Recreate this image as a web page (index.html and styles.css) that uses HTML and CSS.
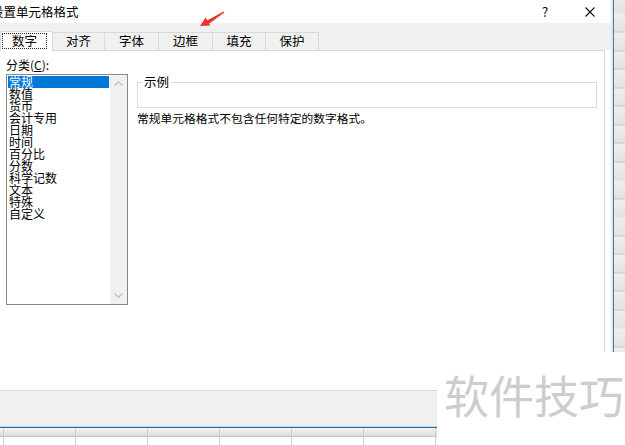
FILE: index.html
```html
<!DOCTYPE html>
<html lang="zh-CN">
<head>
    <meta charset="UTF-8">
    <title>设置单元格格式</title>
    <link rel="stylesheet" href="styles.css">
</head>
<body>
<div class="screen">
    <div class="top">
        <!-- Format Cells dialog -->
        <div class="dialog">
            <div class="titlebar">
                <span class="title">设置单元格格式</span>
                <span class="help">?</span>
                <svg class="close" width="10" height="10" viewBox="0 0 10 10">
                    <path d="M0.5 0.5 L9.5 9.5 M9.5 0.5 L0.5 9.5" stroke="#111" stroke-width="1.1" fill="none"/>
                </svg>
            </div>

            <div class="tabbar">
                <div class="tab active"><span class="focus">数字</span></div>
                <div class="tab t2">对齐</div>
                <div class="tab t3">字体</div>
                <div class="tab t4">边框</div>
                <div class="tab t5">填充</div>
                <div class="tab t6">保护</div>
            </div>

            <div class="page">
                <div class="left">
                    <div class="label">分类(<u>C</u>):</div>
                    <div class="listbox">
                        <ul class="items">
                            <li class="sel">常规</li>
                            <li>数值</li>
                            <li>货币</li>
                            <li>会计专用</li>
                            <li>日期</li>
                            <li>时间</li>
                            <li>百分比</li>
                            <li>分数</li>
                            <li>科学记数</li>
                            <li>文本</li>
                            <li>特殊</li>
                            <li>自定义</li>
                        </ul>
                        <div class="scrollbar">
                            <div class="sb-btn">
                                <svg width="9" height="5" viewBox="0 0 9 5"><path d="M0.5 4.5 L4.5 0.8 L8.5 4.5" stroke="#c3c3c3" stroke-width="1.5" fill="none"/></svg>
                            </div>
                            <div class="sb-btn">
                                <svg width="9" height="5" viewBox="0 0 9 5"><path d="M0.5 0.5 L4.5 4.2 L8.5 0.5" stroke="#c3c3c3" stroke-width="1.5" fill="none"/></svg>
                            </div>
                        </div>
                    </div>
                </div>

                <div class="right">
                    <fieldset class="sample">
                        <legend>示例</legend>
                    </fieldset>
                    <p class="desc">常规单元格格式不包含任何特定的数字格式。</p>
                </div>
            </div>
        </div>

        <!-- sheet behind the dialog -->
        <div class="rowheads"><div class="rh"></div></div>
    </div>

    <div class="footer"></div>

    <div class="grid">
        <div class="hdr"></div>
        <div class="cells"></div>
    </div>

    <div class="watermark">软件技巧</div>

    <svg class="arrow" width="34" height="22" viewBox="0 0 34 22">
        <polygon points="28.4,4.6 27.6,3.4 10.6,12.7 12.6,15.9" fill="#e5332a"/>
        <polygon points="4,18 14.2,17.4 9.6,9.6" fill="#e5332a"/>
    </svg>
</div>
</body>
</html>
```

FILE: styles.css
```css
* {
    box-sizing: border-box;
}
body {
    margin: 0;
    width: 625px;
    height: 445px;
    overflow: hidden;
    background-color: #ffffff;
    font-family: "Noto Sans CJK SC", "Noto Sans", sans-serif;
    font-size: 12px;
    color: #000;
}
.screen {
    position: relative;
    width: 625px;
    height: 445px;
}
.top {
    display: flex;
    height: 390px;
}

/* Dialog */
.dialog {
    width: 611px;
    background-color: #ffffff;
}
.titlebar {
    height: 23px;
    display: flex;
    align-items: center;
}
.title {
    flex: 1;
    margin-left: -9px;
    font-size: 12.5px;
    line-height: 16px;
}
.help {
    width: 10px;
    text-align: center;
    font-size: 13px;
    line-height: 16px;
    margin-right: 35px;
}
.close {
    display: block;
    margin-right: 16px;
}

/* Tabs */
.tabbar {
    height: 27px;
    background-color: #f0f0f0;
    display: flex;
    align-items: flex-end;
}
.tab {
    width: 53px;
    height: 18px;
    border: 1px solid #d9d9d9;
    border-left: none;
    border-bottom: none;
    background-color: #f0f0f0;
    text-align: center;
    font-size: 12.5px;
    line-height: 16px;
}
.tab.active {
    width: 53px;
    height: 20px;
    border-left: 1px solid #d9d9d9;
    background-color: #ffffff;
    position: relative;
    top: 1px;
    z-index: 1;
}
.tab.t2 { width: 52px; }
.tab.t3 { width: 54px; }
.tab.t4 { width: 54px; }
.focus {
    display: block;
    width: 45px;
    height: 16px;
    margin: 1px 0 0 1px;
    border: 1px dotted #222;
    line-height: 14px;
}

/* Tab page */
.page {
    width: 605px;
    height: 340px;
    border-top: 1px solid #d9d9d9;
    border-right: 1px solid #d9d9d9;
    padding-left: 6px;
    display: flex;
}
.left {
    width: 122px;
}
.label {
    margin-top: 6px;
    line-height: 16px;
    font-size: 12px;
}
.listbox {
    margin-top: 1px;
    width: 122px;
    height: 231px;
    border: 1px solid #828790;
    display: flex;
}
.items {
    list-style: none;
    margin: 0;
    padding: 1px 1px 0 1px;
    width: 103px;
}
.items li {
    height: 12px;
    line-height: 12px;
    font-size: 12px;
    padding-left: 1px;
    white-space: nowrap;
}
.items li.sel {
    background-color: #0078d7;
    color: #ffffff;
}
.scrollbar {
    width: 17px;
    background-color: #f0f0f0;
    display: flex;
    flex-direction: column;
    justify-content: space-between;
}
.sb-btn {
    height: 17px;
    display: flex;
    align-items: center;
    justify-content: center;
}
.sb-btn svg {
    display: block;
}

.right {
    width: 460px;
    margin-left: 9px;
}
.sample {
    margin: 24px 0 0 0;
    padding: 0;
    height: 33px;
    border: 1px solid #dcdcdc;
}
.sample legend {
    margin-left: 4px;
    padding: 0 2px;
    font-size: 12.5px;
    line-height: 14px;
}
.desc {
    margin: 2px 0 0 0;
    line-height: 16px;
    font-size: 11.75px;
    white-space: nowrap;
}

/* Sheet row headers at the right */
.rowheads {
    width: 14px;
    height: 352px;
    background-color: #e6e6e6;
    padding-left: 2px;
}
.rh {
    height: 100%;
    border-left: 1px solid #3f7dab;
    background-image: repeating-linear-gradient(to bottom, #eeeeee 0, #e2e2e2 17.5px, #c6c6c6 17.5px, #c6c6c6 18.5px);
    background-position: 0 14.5px;
}

/* Dialog bottom strip */
.footer {
    height: 36px;
    background-color: #f0f0f0;
    border-top: 1px solid #d9d9d9;
}

/* Grid under the dialog */
.grid {
    border-top: 1px solid #b5dbef;
}
.hdr {
    height: 10px;
    border-top: 1px solid #2f6f99;
    border-bottom: 1px solid #c4c4c4;
    background-image: repeating-linear-gradient(to right, #cfcfcf 0, #cfcfcf 1px, transparent 1px, transparent 72px),
                      linear-gradient(to bottom, #f4f4f4, #dcdcdc);
    background-position: 3px 0, 0 0;
}
.cells {
    height: 8px;
    background-image: repeating-linear-gradient(to right, #d2d2d2 0, #d2d2d2 1px, transparent 1px, transparent 72px);
    background-position: 3px 0;
}

/* Overlays */
.watermark {
    position: absolute;
    left: 437px;
    top: 352px;
    width: 188px;
    height: 93px;
    background-color: #ffffff;
    padding: 20px 0 0 7px;
    font-size: 45px;
    line-height: 45px;
    color: #cdcdcd;
    white-space: nowrap;
}
.arrow {
    position: absolute;
    left: 196px;
    top: 8px;
}
```
